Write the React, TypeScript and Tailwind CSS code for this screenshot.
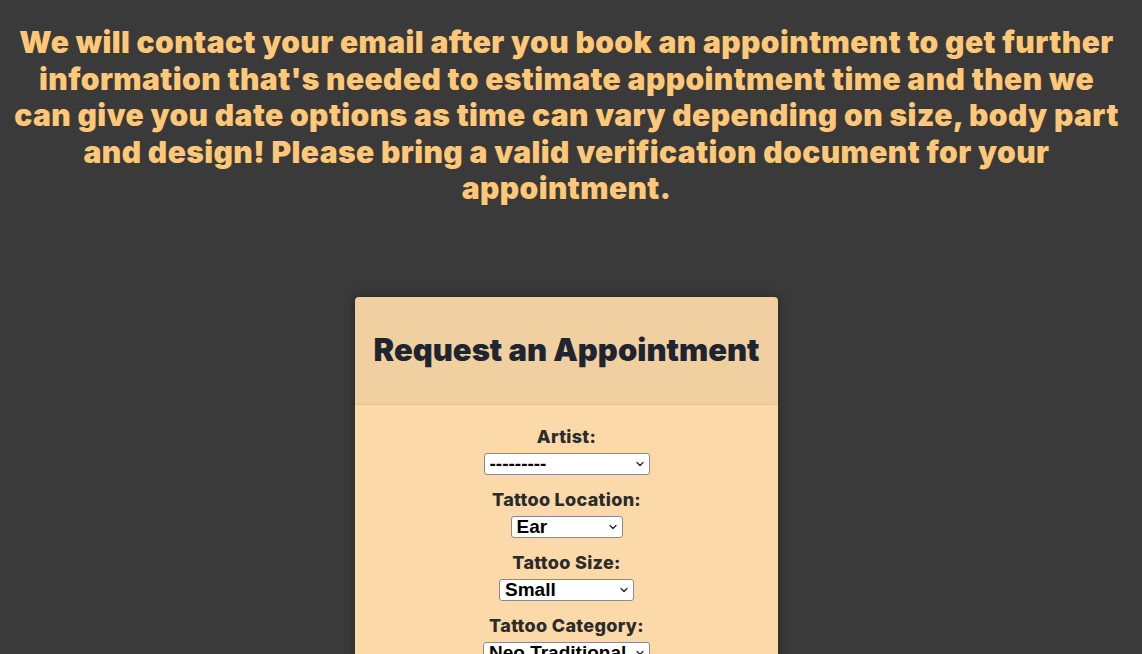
import { ChevronDown } from "lucide-react";

interface FieldProps {
  readonly label: string;
  readonly value: string;
  readonly width: string;
  readonly first?: boolean;
}

function Field({ label, value, width, first = false }: FieldProps) {
  return (
    <>
      <label
        className={`${first ? "" : "mt-[15px]"} block text-[18px] leading-[20px] font-extrabold tracking-[0.3px] text-[#2b2b2b]`}
      >
        {label}
      </label>
      <div className={`relative mt-[6px] h-[22px] ${width}`}>
        <select className="block h-[22px] w-full appearance-none rounded-[3px] border border-[#8a8a8a] bg-white pl-[5px] font-['Liberation_Sans',sans-serif] text-[19px] leading-[20px] font-bold text-black">
          <option>{value}</option>
        </select>
        <ChevronDown
          className="pointer-events-none absolute top-[5px] right-[4px] h-[12px] w-[12px] text-[#222]"
          strokeWidth={2.5}
        />
      </div>
    </>
  );
}

export default function App() {
  return (
    <div className="min-h-[654px] bg-[#3a3a3a] pr-[9px] font-['Inter',sans-serif]">
      <h1 className="pt-[24px] text-center text-[30px] leading-[36.5px] font-black tracking-[0.4px] whitespace-nowrap text-[#fec878]">
        We will contact your email after you book an appointment to get further
        <br />
        information that's needed to estimate appointment time and then we
        <br />
        can give you date options as time can vary depending on size, body part
        <br />
        and design! Please bring a valid verification document for your
        <br />
        appointment.
      </h1>

      <div className="mt-[90px] flex justify-center">
        <div className="w-[423px] overflow-hidden rounded-[4px] shadow-[0_0_12px_rgba(0,0,0,0.35)]">
          <div className="flex h-[108px] items-center justify-center border-b border-[#e6c390] bg-[#f0cfa0]">
            <h2 className="text-[31px] font-black tracking-[0px] text-[#1e2530]">
              Request an Appointment
            </h2>
          </div>
          <div className="flex flex-col items-center bg-[#fcd9a9] pt-[22px] pb-10">
            <Field first label="Artist:" value="---------" width="w-[166px]" />
            <Field label="Tattoo Location:" value="Ear" width="w-[112px]" />
            <Field label="Tattoo Size:" value="Small" width="w-[135px]" />
            <Field label="Tattoo Category:" value="Neo Traditional" width="w-[167px]" />
          </div>
        </div>
      </div>
    </div>
  );
}
